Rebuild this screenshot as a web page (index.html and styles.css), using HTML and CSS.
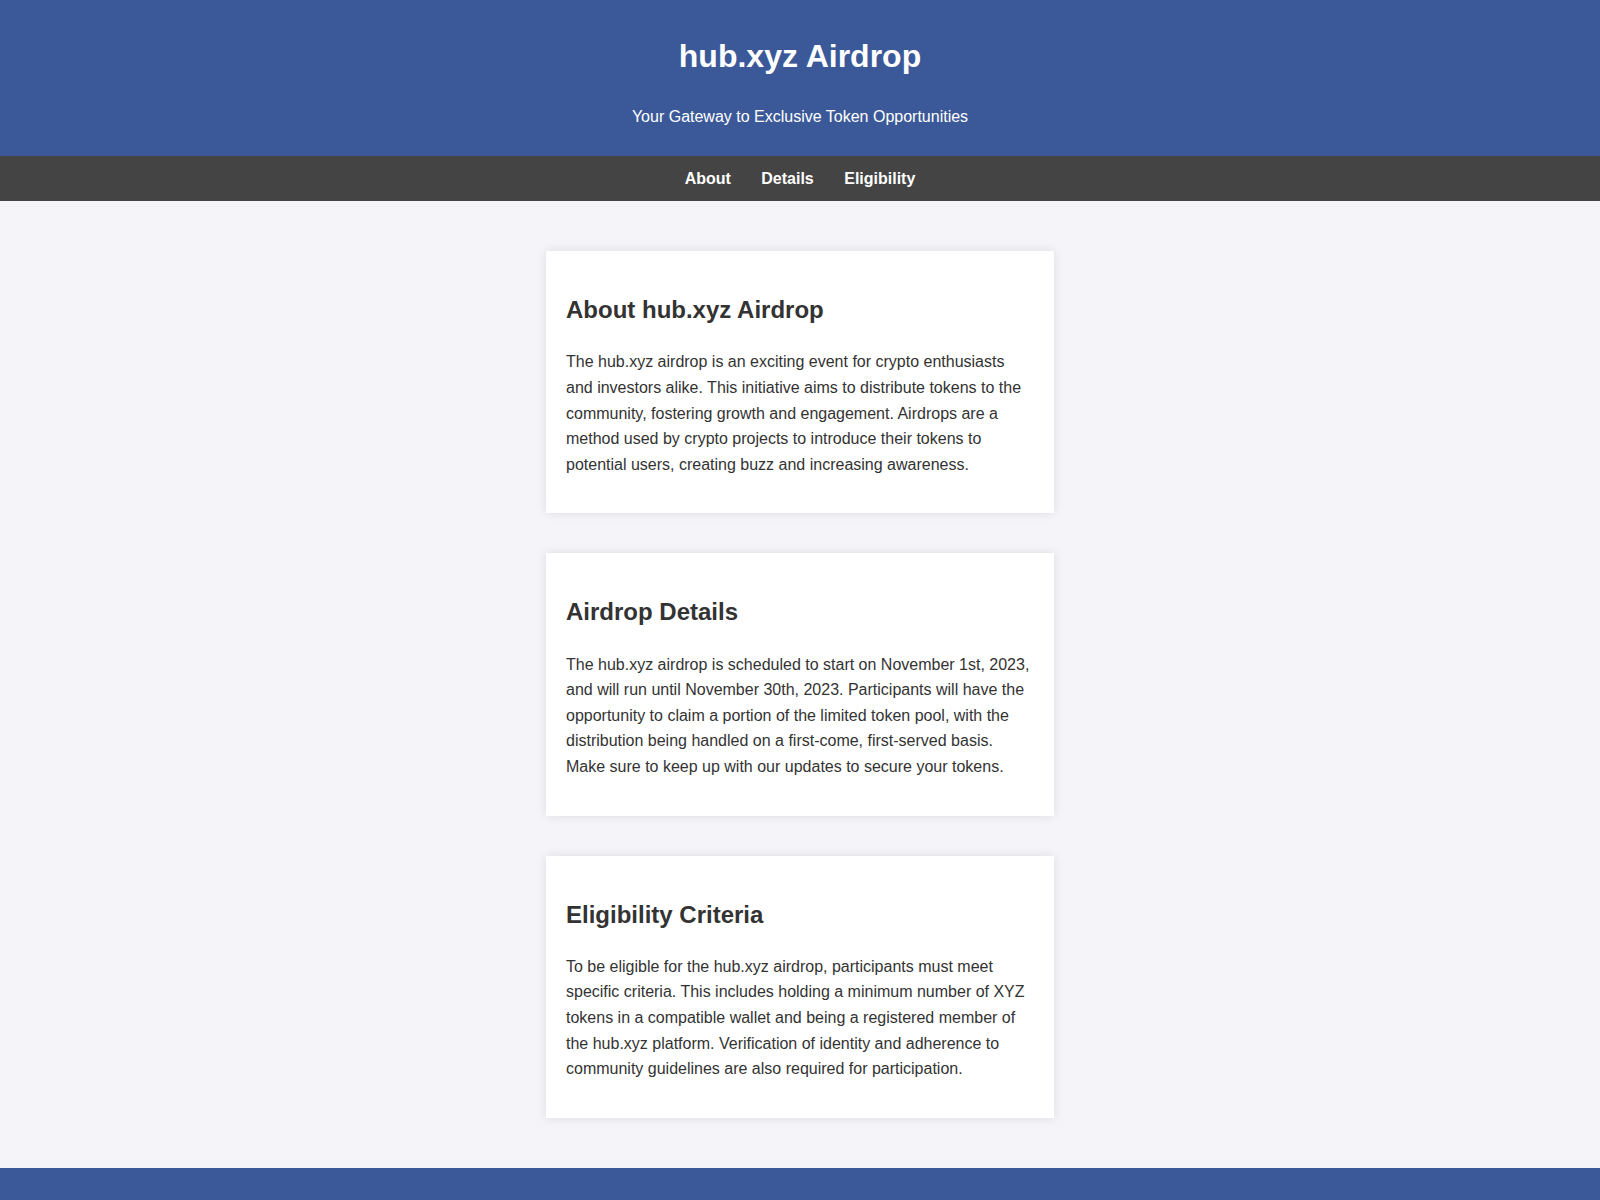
FILE: index.html
```html
<!DOCTYPE html>
<html lang="en">
<head>
    <meta charset="UTF-8">
    <meta name="viewport" content="width=device-width, initial-scale=1.0">
    <title>hub.xyz Airdrop</title>
    <link rel="stylesheet" href="styles.css">
</head>
<body>
    <header>
        <h1>hub.xyz Airdrop</h1>
        <p>Your Gateway to Exclusive Token Opportunities</p>
    </header>
    <nav>
        <a href="#about">About</a>
        <a href="#details">Details</a>
        <a href="#eligibility">Eligibility</a>
    </nav>
    <main>
        <section id="about">
            <h2>About hub.xyz Airdrop</h2>
            <p>The hub.xyz airdrop is an exciting event for crypto enthusiasts and investors alike. This initiative aims to distribute tokens to the community, fostering growth and engagement. Airdrops are a method used by crypto projects to introduce their tokens to potential users, creating buzz and increasing awareness.</p>
        </section>
        <section id="details">
            <h2>Airdrop Details</h2>
            <p>The hub.xyz airdrop is scheduled to start on November 1st, 2023, and will run until November 30th, 2023. Participants will have the opportunity to claim a portion of the limited token pool, with the distribution being handled on a first-come, first-served basis. Make sure to keep up with our updates to secure your tokens.</p>
        </section>
        <section id="eligibility">
            <h2>Eligibility Criteria</h2>
            <p>To be eligible for the hub.xyz airdrop, participants must meet specific criteria. This includes holding a minimum number of XYZ tokens in a compatible wallet and being a registered member of the hub.xyz platform. Verification of identity and adherence to community guidelines are also required for participation.</p>
        </section>
    </main>
    <footer></footer>
</body>
</html>
```

FILE: styles.css
```css
body {
    font-family: "Liberation Sans", Arial, sans-serif;
    line-height: 1.6;
    margin: 0;
    padding: 0;
    background-color: #f4f4f9;
    color: #333;
}
header {
    background-color: #3b5998;
    color: white;
    text-align: center;
    padding: 10px 0;
}
header h1 {
    font-size: 32px;
    margin: 21.44px 0;
}
header p {
    margin: 21.44px 0 16px;
    font-size: 16px;
}
nav {
    background-color: #444;
    text-align: center;
    padding: 10px 0;
}
nav a {
    color: white;
    text-decoration: none;
    font-weight: bold;
    margin: 0 13px;
}
main {
    display: flex;
    flex-direction: column;
    align-items: center;
    gap: 40px;
    padding: 50px 0;
}
section {
    box-sizing: border-box;
    width: 508px;
    background-color: white;
    padding: 20px;
    box-shadow: 0 0 10px rgba(0, 0, 0, 0.1);
}
section h2 {
    font-size: 24px;
    margin: 19.92px 0;
}
section p {
    margin: 16px 0;
}
footer {
    background-color: #3b5998;
    height: 60px;
}
```
